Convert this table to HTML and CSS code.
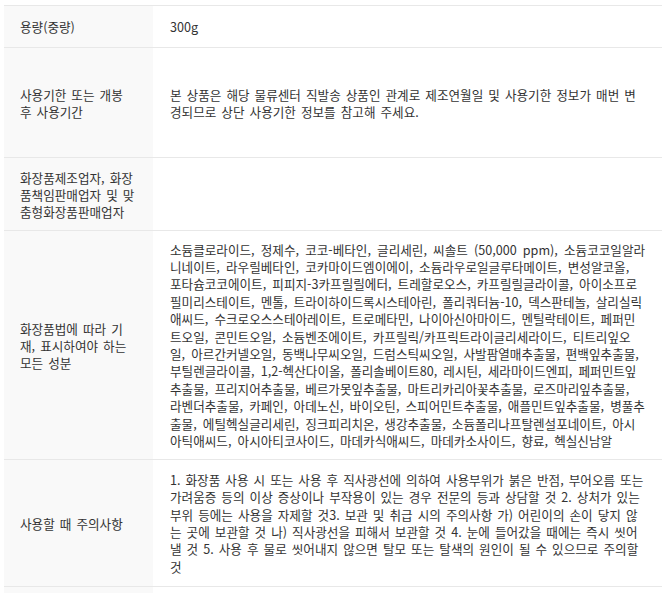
FILE: index.html
```html
<!DOCTYPE html>
<html lang="ko">
<head>
<meta charset="utf-8">
<link rel="stylesheet" href="styles.css">
</head>
<body>
<div class="wrap">
<table class="info">
<tbody>
<tr class="r1">
<th>용량(중량)</th>
<td>300g</td>
</tr>
<tr class="r2">
<th>사용기한 또는 개봉<br>후 사용기간</th>
<td>본 상품은 해당 물류센터 직발송 상품인 관계로 제조연월일 및 사용기한 정보가 매번 변경되므로 상단 사용기한 정보를 참고해 주세요.</td>
</tr>
<tr class="r3">
<th>화장품제조업자, 화장품책임판매업자 및 맞춤형화장품판매업자</th>
<td></td>
</tr>
<tr class="r4">
<th>화장품법에 따라 기재, 표시하여야 하는 모든 성분</th>
<td class="ingredients">소듐클로라이드, 정제수, 코코-베타인, 글리세린, 씨솔트 (50,000 ppm), 소듐코코일알라<br>니네이트, 라우릴베타인, 코카마이드엠이에이, 소듐라우로일글루타메이트, 변성알코올,<br>포타슘코코에이트, 피피지-3카프릴릴에터, 트레할로오스, 카프릴릴글라이콜, 아이소프로<br>필미리스테이트, 멘톨, 트라이하이드록시스테아린, 폴리쿼터늄-10, 덱스판테놀, 살리실릭<br>애씨드, 수크로오스스테아레이트, 트로메타민, 나이아신아마이드, 멘틸락테이트, 페퍼민<br>트오일, 콘민트오일, 소듐벤조에이트, 카프릴릭/카프릭트라이글리세라이드, 티트리잎오<br>일, 아르간커넬오일, 동백나무씨오일, 드럼스틱씨오일, 사발팜열매추출물, 편백잎추출물,<br>부틸렌글라이콜, 1,2-헥산다이올, 폴리솔베이트80, 레시틴, 세라마이드엔피, 페퍼민트잎<br>추출물, 프리지어추출물, 베르가못잎추출물, 마트리카리아꽃추출물, 로즈마리잎추출물,<br>라벤더추출물, 카페인, 아데노신, 바이오틴, 스피어민트추출물, 애플민트잎추출물, 병풀추<br>출물, 에틸헥실글리세린, 징크피리치온, 생강추출물, 소듐폴리나프탈렌설포네이트, 아시<br>아틱애씨드, 아시아티코사이드, 마데카식애씨드, 마데카소사이드, 향료, 헥실신남알</td>
</tr>
<tr class="r5">
<th>사용할 때 주의사항</th>
<td>1. 화장품 사용 시 또는 사용 후 직사광선에 의하여 사용부위가 붉은 반점, 부어오름 또는 가려움증 등의 이상 증상이나 부작용이 있는 경우 전문의 등과 상담할 것 2. 상처가 있는 부위 등에는 사용을 자제할 것3. 보관 및 취급 시의 주의사항 가) 어린이의 손이 닿지 않는 곳에 보관할 것 나) 직사광선을 피해서 보관할 것 4. 눈에 들어갔을 때에는 즉시 씻어낼 것 5. 사용 후 물로 씻어내지 않으면 탈모 또는 탈색의 원인이 될 수 있으므로 주의할 것</td>
</tr>
<tr class="r6">
<th></th>
<td></td>
</tr>
</tbody>
</table>
</div>
</body>
</html>
```

FILE: styles.css
```css
html, body {
  margin: 0;
  padding: 0;
  background: #fff;
  overflow: hidden;
}

.wrap {
  padding: 5px 0 0 4px;
}

.info {
  width: 100%;
  border-collapse: collapse;
  table-layout: fixed;
  font-family: "Noto Sans CJK KR", "Noto Sans", sans-serif;
  font-size: 12.6px;
  word-spacing: 1.5px;
  color: #333;
  border-top: 1px solid #e8e8e8;
}

.info tr {
  border-bottom: 1px solid #e8e8e8;
}

.info th {
  width: 117px;
  background: #f9f9f9;
  font-weight: normal;
  text-align: left;
  vertical-align: middle;
  padding: 0 16px 0 16px;
  line-height: 17px;
  word-break: break-all;
}

.info td {
  vertical-align: middle;
  padding: 0 15px 0 17px;
  line-height: 17px;
  word-break: break-all;
}

.info .ingredients {
  word-spacing: 2.6px;
  white-space: nowrap;
}

.r1 { height: 42px; }
.r2 { height: 110px; }
.r3 { height: 73px; }
.r4 { height: 229px; }
.r4 td { line-height: 17.4px; }
.r5 { height: 127px; }
.r5 td { line-height: 17.4px; }
.r6 { height: 20px; }
```
